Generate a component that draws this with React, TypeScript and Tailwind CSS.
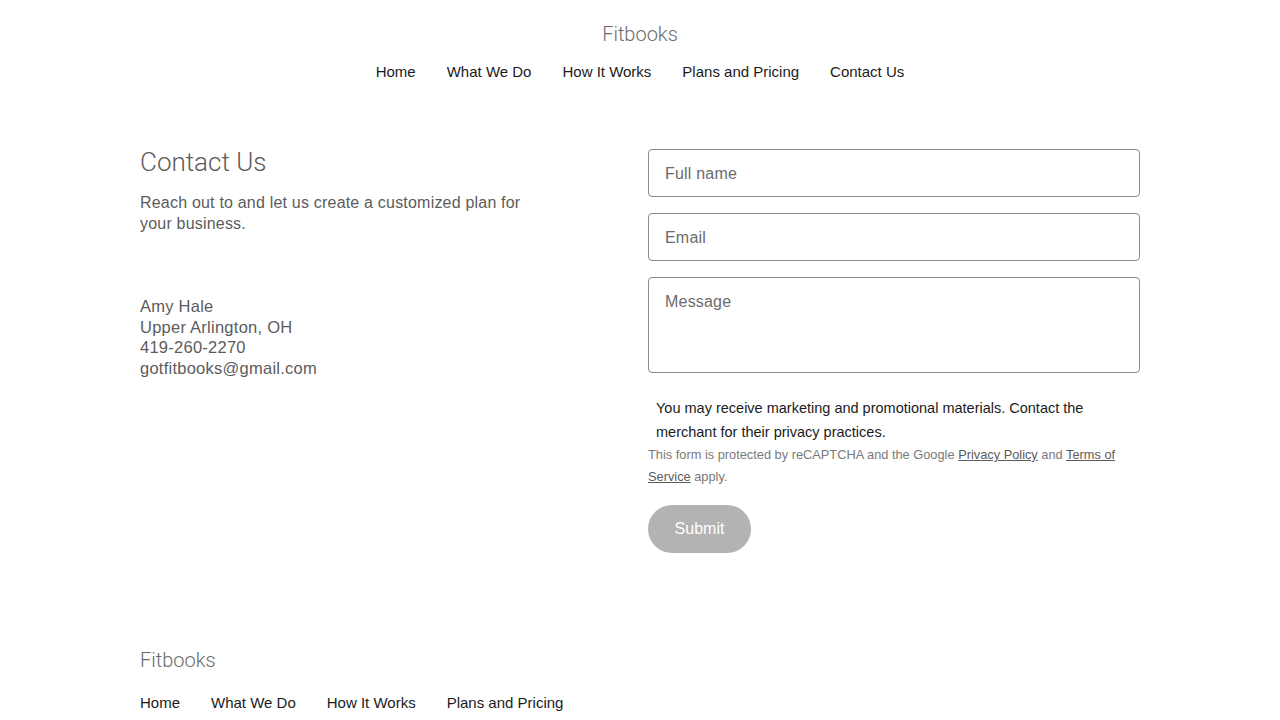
import React from 'react';

const navItems = ['Home', 'What We Do', 'How It Works', 'Plans and Pricing', 'Contact Us'];
const footerItems = ['Home', 'What We Do', 'How It Works', 'Plans and Pricing'];

const font = { fontFamily: '"Liberation Sans", Arial, sans-serif' };
const light = { fontFamily: 'Roboto, "Liberation Sans", sans-serif' };

const NavLinks = ({ items, centered }: { items: string[]; centered?: boolean }) => (
  <nav className={`flex gap-[31px] text-[15px] leading-5 text-[#1b1b1b] ${centered ? 'justify-center' : ''}`}>
    {items.map((item) => (
      <a key={item} href="#" className="whitespace-nowrap">
        {item}
      </a>
    ))}
  </nav>
);

const Field = ({ label, tall }: { label: string; tall?: boolean }) =>
  tall ? (
    <textarea
      placeholder={label}
      className="h-[96px] w-full resize-none rounded-[4px] border border-[#8c8c8c] px-4 pt-3 text-base leading-6 tracking-[0.2px] text-[#333] placeholder:text-[#6b6b6b] outline-none"
    />
  ) : (
    <input
      placeholder={label}
      className="h-12 w-full rounded-[4px] border border-[#8c8c8c] px-4 pt-[2px] text-base tracking-[0.2px] text-[#333] placeholder:text-[#6b6b6b] outline-none"
    />
  );

export default function App() {
  return (
    <div className="min-h-[720px] bg-white" style={font}>
      <header className="pt-[22px]">
        <div className="text-center text-[20px] leading-6 font-light text-[#6b6b6b]" style={light}>
          Fitbooks
        </div>
        <div className="mt-4">
          <NavLinks items={navItems} centered />
        </div>
      </header>

      <main className="mx-auto mt-[67px] grid w-[1000px] grid-cols-2 gap-4">
        <section>
          <h1 className="-mt-[3px] text-[26px] leading-8 font-light text-[#5c5c5c]" style={light}>
            Contact Us
          </h1>
          <p className="mt-[14px] max-w-[400px] text-base leading-[21px] tracking-[0.2px] text-[#5c5c5c]">
            Reach out to and let us create a customized plan for your business.
          </p>
          <div className="mt-[62px] text-[16.5px] leading-[20.7px] tracking-[0.25px] text-[#5c5c5c]">
            <div>Amy Hale</div>
            <div>Upper Arlington, OH</div>
            <div>419-260-2270</div>
            <div>gotfitbooks@gmail.com</div>
          </div>
        </section>

        <section className="flex flex-col">
          <form className="flex flex-col gap-4" onSubmit={(e) => e.preventDefault()}>
            <Field label="Full name" />
            <Field label="Email" />
            <Field label="Message" tall />
          </form>
          <p className="mt-[23px] pl-2 pr-10 text-[14.5px] leading-6 text-[#1b1b1b]">
            You may receive marketing and promotional materials. Contact the merchant for their privacy practices.
          </p>
          <p className="text-[12.8px] leading-[22px] text-[#7a7a7a]">
            This form is protected by reCAPTCHA and the Google{' '}
            <a href="#" className="text-[#5c5c5c] underline">
              Privacy Policy
            </a>{' '}
            and{' '}
            <a href="#" className="text-[#5c5c5c] underline">
              Terms of
            </a>
            <br />
            <a href="#" className="text-[#5c5c5c] underline">
              Service
            </a>{' '}
            apply.
          </p>
          <button
            type="button"
            className="mt-[17px] h-12 w-[103px] rounded-full bg-[#b3b3b3] text-base text-white"
          >
            Submit
          </button>
        </section>
      </main>

      <footer className="mx-auto mt-[95px] w-[1000px]">
        <div className="text-[20px] leading-6 font-light text-[#6b6b6b]" style={light}>
          Fitbooks
        </div>
        <div className="mt-[21px]">
          <NavLinks items={footerItems} />
        </div>
      </footer>
    </div>
  );
}
